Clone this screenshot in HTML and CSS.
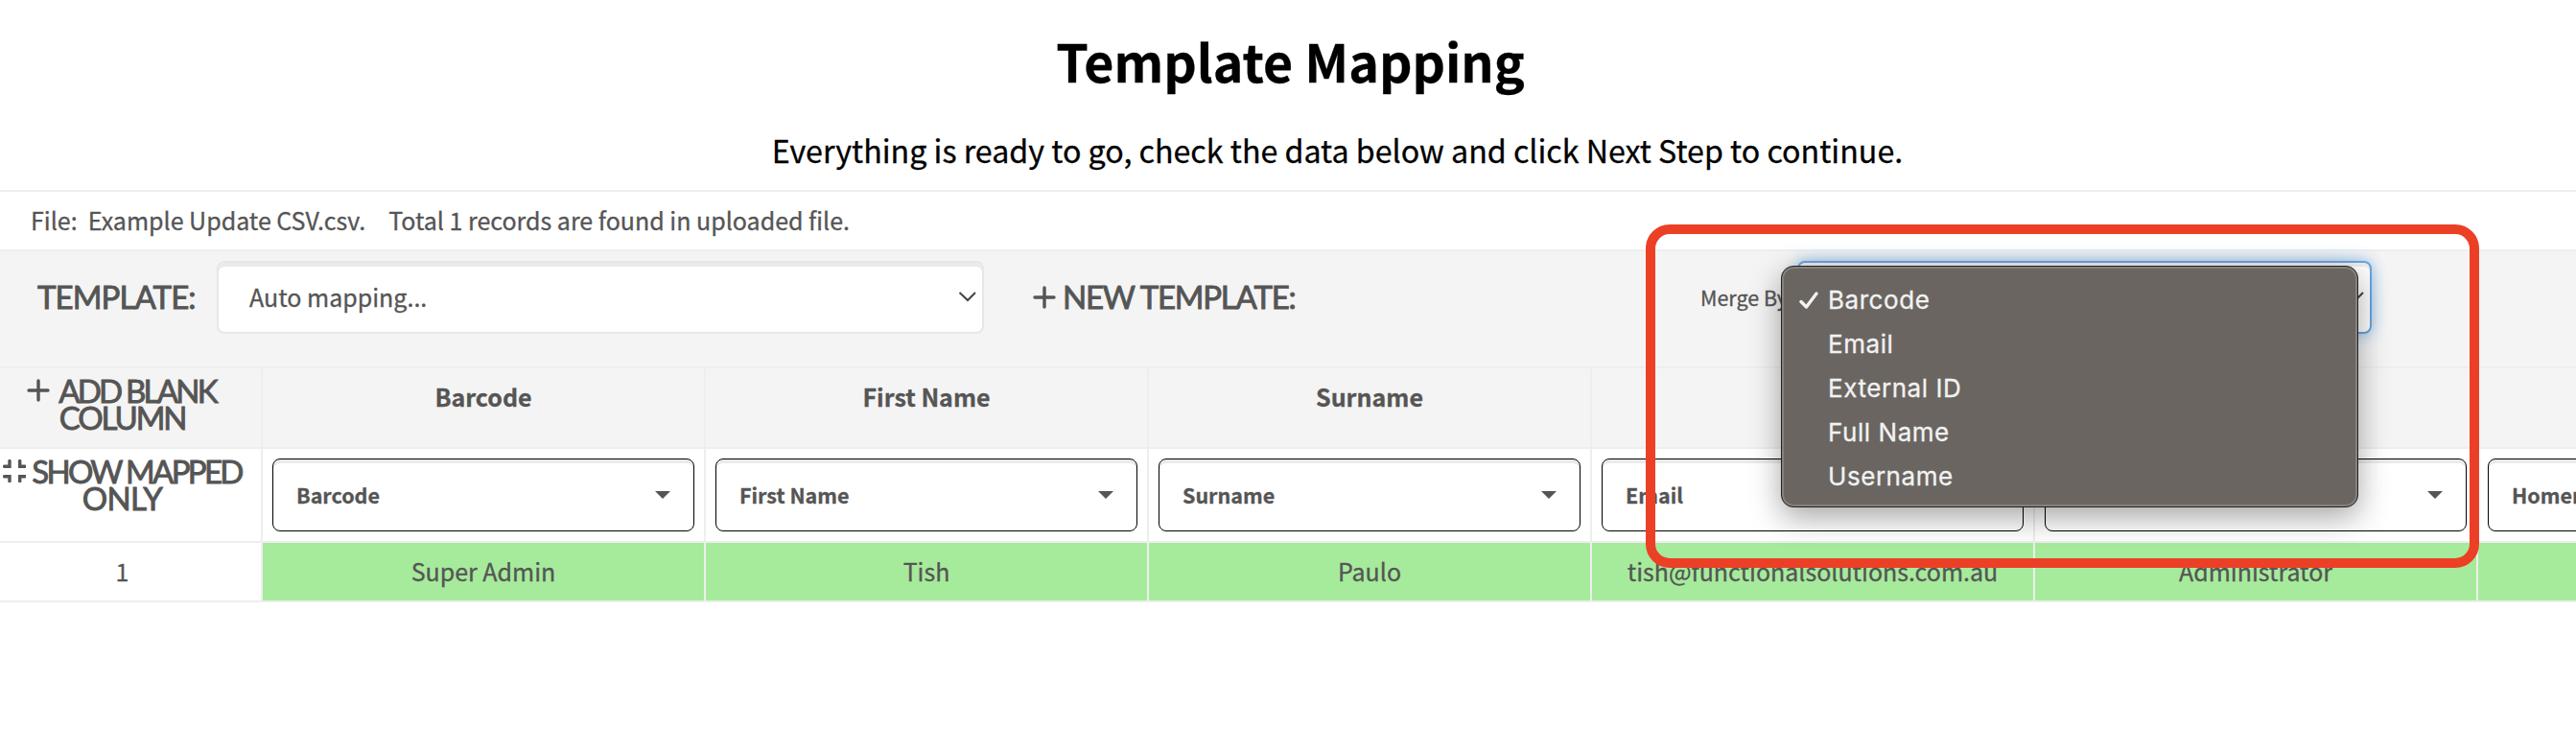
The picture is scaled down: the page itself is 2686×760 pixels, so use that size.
FILE: index.html
```html
<!DOCTYPE html>
<html lang="en">
<head>
<meta charset="utf-8">
<title>Template Mapping</title>
<link rel="stylesheet" href="styles.css">
</head>
<body>
<header class="intro">
  <h1 class="title"><span>Template Mapping</span></h1>
  <p class="subtitle"><span>Everything is ready to go, check the data below and click Next Step to continue.</span></p>
</header>
<div class="file-info">
  <span>File:&nbsp; Example Update CSV.csv.</span>
  <span>Total 1 records are found in uploaded file.</span>
</div>
<div class="toolbar">
  <span class="display label-template">Template:</span>
  <div class="select template-select">
    <span>Auto mapping...</span>
    <svg class="chevron" viewBox="0 0 20 12"><path d="M2.500 2 11 10 19 2"/></svg>
  </div>
  <div class="new-template">
    <svg class="plus" viewBox="0 0 24 24"><path d="M12 2v20M2 12h20"/></svg>
    <span class="display label-new">New Template:</span>
  </div>
  <div class="merge">
    <span class="merge-label">Merge By:</span>
    <div class="select merge-select">
      <svg class="chevron" viewBox="0 0 20 12"><path d="M2.500 2 11 10 19 2"/></svg>
    </div>
    <ul class="menu">
      <li class="checked"><svg class="check" viewBox="0 0 20 18"><path d="M2 10.500 7.500 16 18 2"/></svg><span>Barcode</span></li>
      <li><span>Email</span></li>
      <li><span>External ID</span></li>
      <li><span>Full Name</span></li>
      <li><span>Username</span></li>
    </ul>
  </div>
</div>
<main class="grid">
  <div class="cell head action">
    <div class="line"><svg class="plus" viewBox="0 0 24 24"><path d="M12 2v20M2 12h20"/></svg><span class="display w-add">Add Blank</span></div>
    <div class="line"><span class="display w-column">Column</span></div>
  </div>
  <div class="cell head"><span>Barcode</span></div>
  <div class="cell head"><span>First Name</span></div>
  <div class="cell head"><span>Surname</span></div>
  <div class="cell head"><span>Email</span></div>
  <div class="cell head"></div>
  <div class="cell head"></div>

  <div class="cell map action">
    <div class="line show-line"><svg class="compress" viewBox="0 0 24 24"><path d="M1.600 7.300H7V1.600M17.700 1.600V7.300h5.500M1.600 17.700H7v5M17.700 22.700v-5h5.500"/></svg><span class="display w-show">Show Mapped</span></div>
    <div class="line"><span class="display w-only">Only</span></div>
  </div>
  <div class="cell map"><div class="field"><span>Barcode</span><i class="caret"></i></div></div>
  <div class="cell map"><div class="field"><span>First Name</span><i class="caret"></i></div></div>
  <div class="cell map"><div class="field"><span>Surname</span><i class="caret"></i></div></div>
  <div class="cell map"><div class="field"><span>Email</span><i class="caret"></i></div></div>
  <div class="cell map"><div class="field"><span></span><i class="caret"></i></div></div>
  <div class="cell map"><div class="field"><span>Homeroom</span><i class="caret"></i></div></div>

  <div class="cell index"><span>1</span></div>
  <div class="cell data"><span>Super Admin</span></div>
  <div class="cell data"><span>Tish</span></div>
  <div class="cell data"><span>Paulo</span></div>
  <div class="cell data"><span>tish@functionalsolutions.com.au</span></div>
  <div class="cell data"><span>Administrator</span></div>
  <div class="cell data"></div>
</main>
<div class="highlight"></div>
</body>
</html>
```
FILE: styles.css
```css
* { box-sizing: border-box; }
body {
  margin: 0;
  height: 760px;
  overflow: hidden;
  position: relative;
  background: #fff;
  color: #555;
  font: 25px/40px "Noto Sans CJK SC", "Noto Sans", sans-serif;
  -webkit-text-stroke: 0.3px;
}
.intro { height: 198px; color: #000; text-align: center; }
.title { margin: 0; padding: 23px 0 0 5px; font-size: 53.7px; line-height: 80px; font-weight: 700; }
.subtitle { margin: 0; padding: 33px 0 0 103px; font-size: 32.2px; line-height: 40px; }
.file-info {
  display: flex; align-items: center; gap: 24px; height: 64px; padding: 0 0 2px 32px;
  border-top: 2px solid #eee; border-bottom: 2px solid #eee;
}
.toolbar { display: flex; height: 120px; padding-top: 10px; background: #f4f4f4; }
.display {
  font-family: Lato, "Liberation Sans", sans-serif; font-size: 33px; line-height: 28px;
  text-transform: uppercase; white-space: nowrap; letter-spacing: -2.1px;
  -webkit-text-stroke: 0.9px;
}
.label-template { width: 187px; margin: 23px 0 0 39px; letter-spacing: -0.9px; }
.label-new { letter-spacing: -1.2px; }
.w-add { letter-spacing: -2.8px; }
.w-show { letter-spacing: -2.7px; }
.w-only { letter-spacing: -0.6px; }
.select {
  display: flex; align-items: center; justify-content: space-between; height: 76px;
  border: 2px solid #e7e7e7; border-radius: 8px; background: #fff;
  box-shadow: inset 0 4px #eaeaea; padding: 0 6px 2px 32px;
}
.template-select { width: 800px; }
.chevron { width: 20px; height: 12px; fill: none; stroke: #444; stroke-width: 2; }
.new-template { display: flex; gap: 7px; width: 695px; padding: 23px 0 0 51px; }
.plus { width: 24px; height: 24px; margin-top: 3px; fill: none; stroke: #555; stroke-width: 3.4; stroke-linecap: round; flex: none; }
.merge { position: relative; display: flex; }
.merge-label { width: 101px; margin: 18px 0 0 52px; font-size: 21.5px; white-space: nowrap; }
.merge-select { width: 599px; justify-content: flex-end; border-color: #6aa5de; box-shadow: inset 0 4px #eee, 0 0 16px #8cbcea; }
.menu {
  position: absolute; left: 136px; top: 5px; width: 602px; height: 252px; margin: 0; padding: 12px 0 0 17px;
  list-style: none; border: 1px solid #222; border-radius: 13px; background: #6a6561;
  box-shadow: inset 0 0 0 2px #85817e, 0 10px 32px rgba(0,0,0,.36);
  color: #f2f2f2; font: 26px/46px Inter, "Liberation Sans", sans-serif; letter-spacing: 0.55px;
}
.menu li { display: flex; align-items: center; padding-left: 31px; height: 46px; }
.menu .checked { padding-left: 0; }
.check { width: 20px; height: 18px; margin: 0 11px 0 1px; fill: none; stroke: #f2f2f2; stroke-width: 3.4; stroke-linecap: round; stroke-linejoin: round; }
.menu .checked span { margin-left: -1px; }
.grid {
  display: grid; grid-template-columns: 272px repeat(6, 462px); grid-template-rows: 84px 98px 64px;
  width: 100%; overflow: hidden;
}
.cell { border-top: 2px solid #eee; border-left: 2px solid #eee; text-align: center; }
.head { background: #f4f4f4; padding-top: 9px; font-weight: 700; }
.action { border-left: 0; padding: 9px 17px 0 0; font-weight: 400; }
.line { display: flex; justify-content: center; gap: 9px; height: 28px; }
.line .plus { margin-top: 2px; }
.line .w-add { margin-right: 2px; }
.show-line { gap: 6px; }
.compress { width: 24px; height: 24px; margin-top: 2px; fill: none; stroke: #555; stroke-width: 3.4; stroke-linecap: round; flex: none; }
.map { padding: 10px 10px 0; }
.map.action { padding: 9px 17px 0 0; }
.field {
  display: flex; align-items: center; justify-content: space-between; height: 76px; padding: 0 24px 0 24px;
  border: 1px solid #000; border-radius: 8px; box-shadow: inset 0 4px #eaeaea;
  font-size: 21.5px; font-weight: 700;
}
.caret { border: 8px solid transparent; border-top-color: #555; border-bottom: 0; }
.index, .data { padding-top: 9px; border-bottom: 2px solid #eee; }
.index { border-left: 0; padding-right: 17px; }
.data { background: #a6eb9b; }
.highlight {
  position: absolute; left: 1716px; top: 234px; width: 869px; height: 358px;
  border: 10px solid #ec4026; border-radius: 25px;
}
```
